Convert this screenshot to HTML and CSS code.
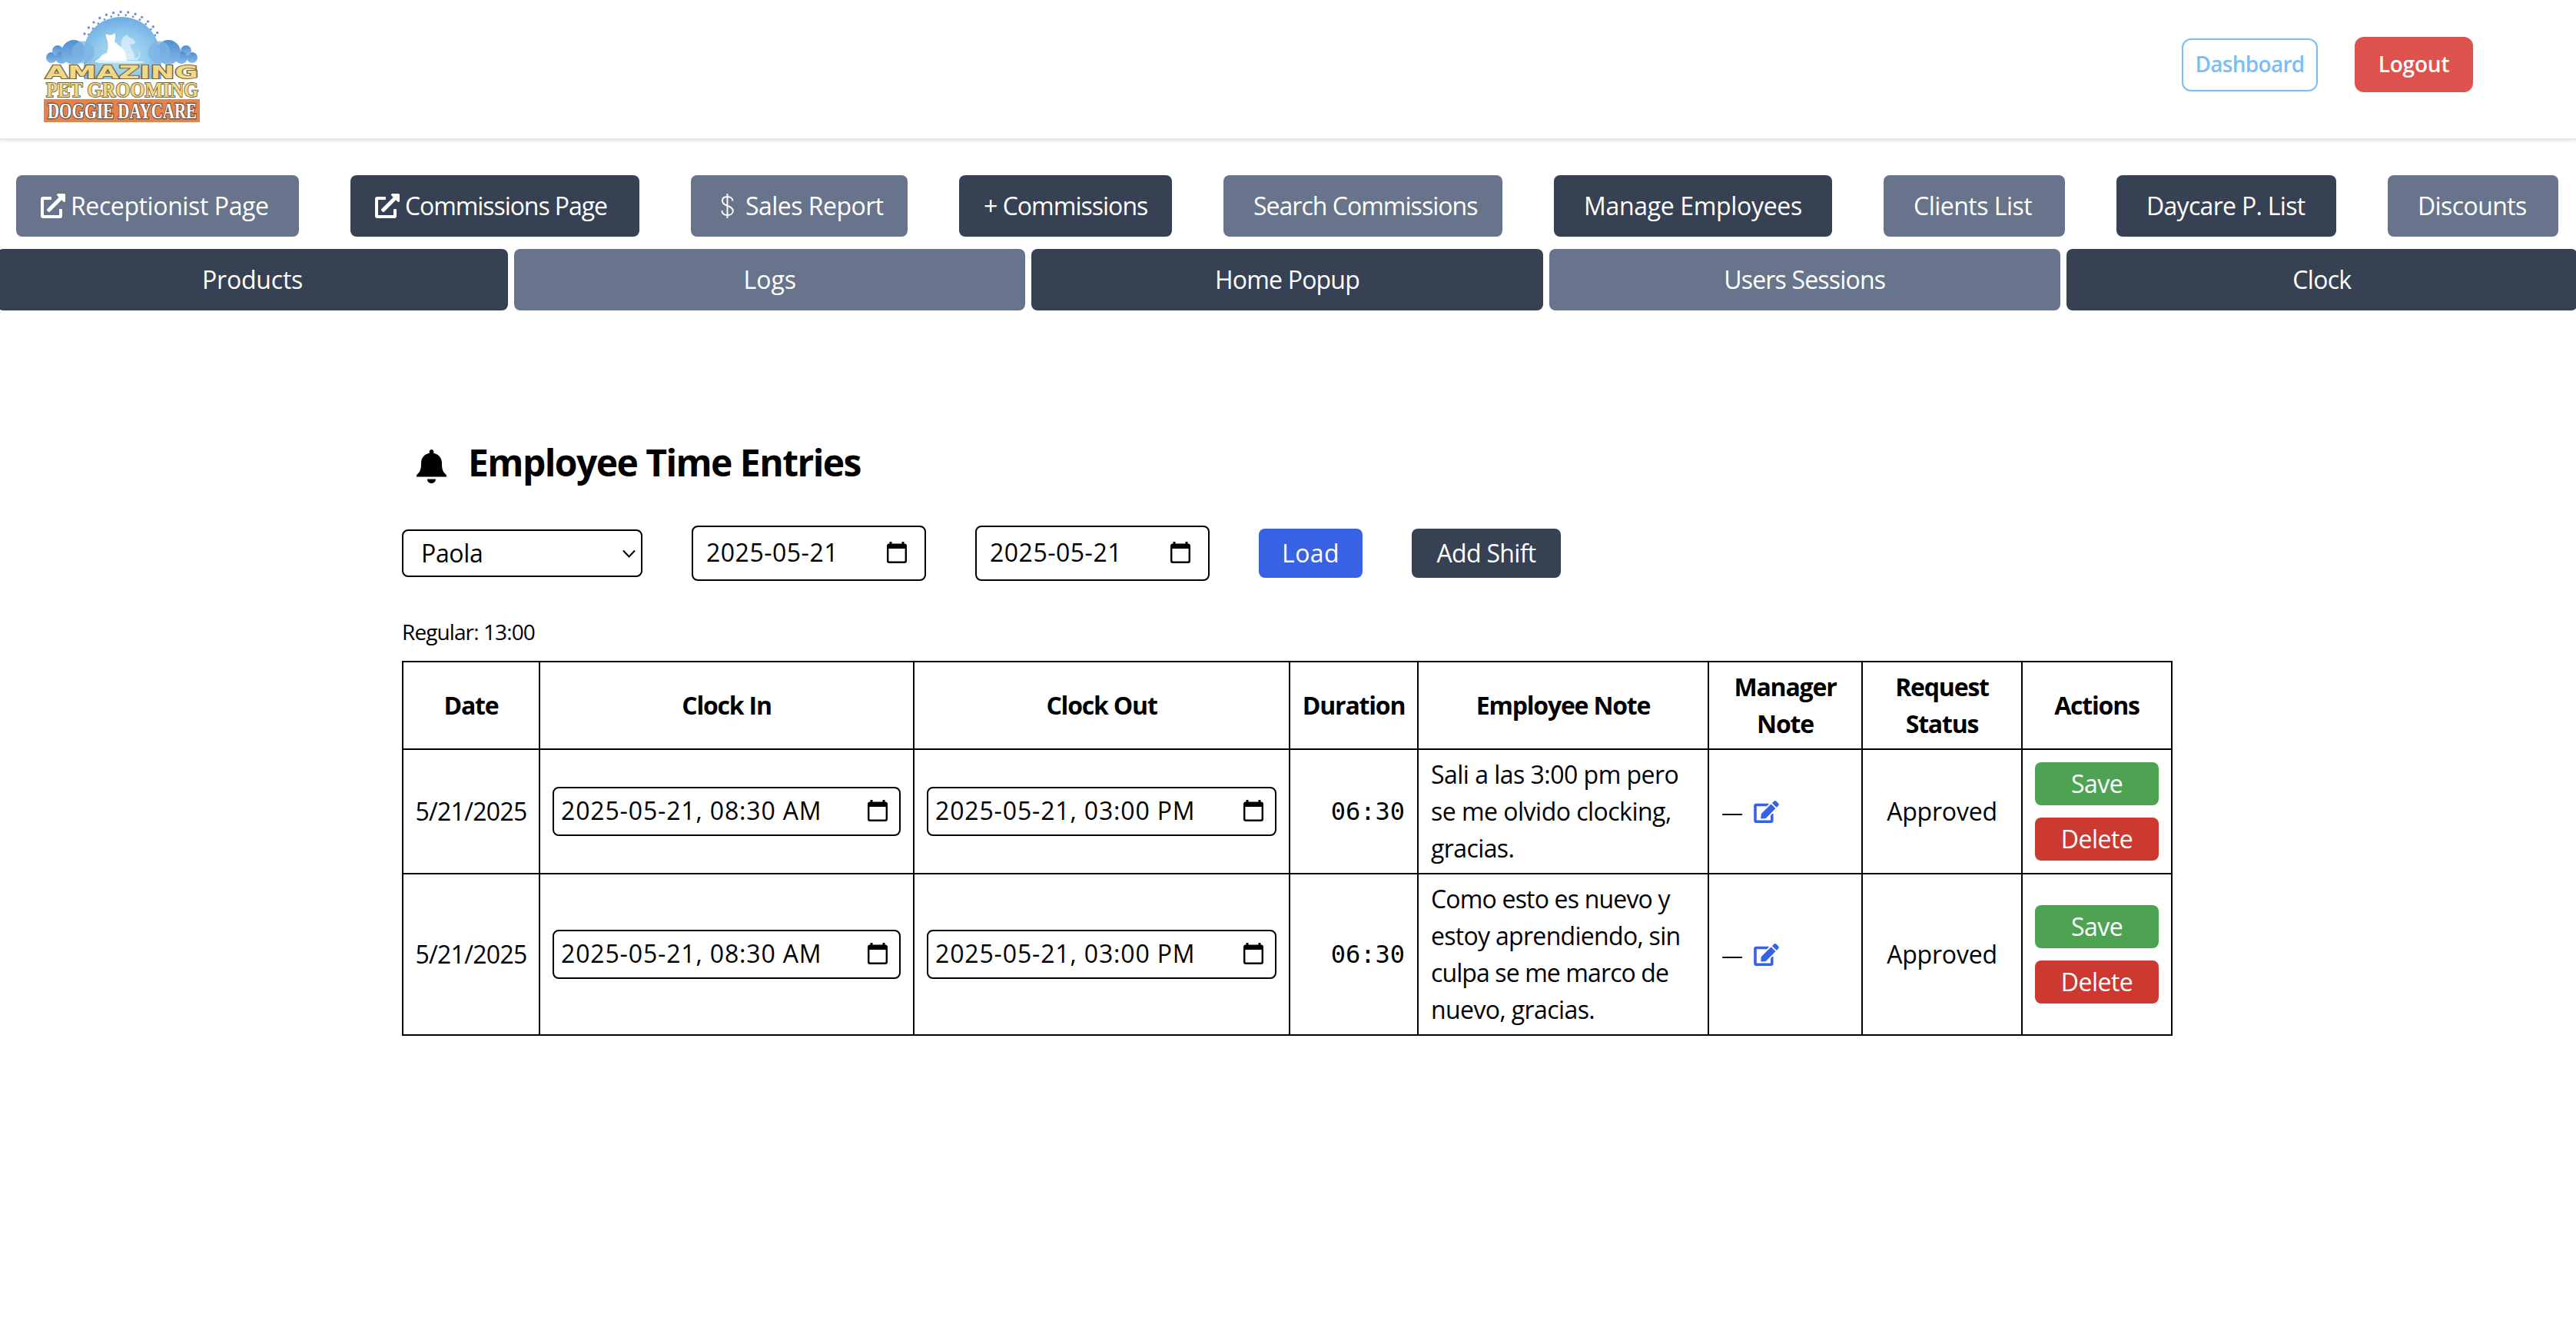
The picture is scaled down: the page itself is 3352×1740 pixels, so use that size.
FILE: index.html
```html
<!DOCTYPE html>
<html lang="en">
<head>
<meta charset="utf-8">
<title>Employee Time Entries</title>
<link rel="stylesheet" href="styles.css">
</head>
<body>
<svg class="defs" aria-hidden="true">
  <symbol id="i-open" viewBox="0 0 512 512"><path d="M432,320H400a16,16,0,0,0-16,16V448H64V128H208a16,16,0,0,0,16-16V80a16,16,0,0,0-16-16H48A48,48,0,0,0,0,112V464a48,48,0,0,0,48,48H400a48,48,0,0,0,48-48V336A16,16,0,0,0,432,320ZM488,0h-128c-21.37,0-32.05,25.91-17,41l35.73,35.73L135,320.37a24,24,0,0,0,0,34L157.67,377a24,24,0,0,0,34,0L435.28,133.32,471,169c15,15,41,4.5,41-17V24A24,24,0,0,0,488,0Z"/></symbol>
  <symbol id="i-edit" viewBox="0 0 576 512"><path d="M402.6 83.2l90.2 90.2c3.8 3.8 3.8 10 0 13.8L274.4 405.6l-92.8 10.3c-12.4 1.4-22.9-9.1-21.5-21.5l10.3-92.8L388.8 83.2c3.8-3.8 10-3.8 13.8 0zm162-22.9l-48.8-48.8c-15.2-15.2-39.9-15.2-55.2 0l-35.4 35.4c-3.8 3.8-3.8 10 0 13.8l90.2 90.2c3.8 3.8 10 3.8 13.8 0l35.4-35.4c15.2-15.3 15.2-40 0-55.2zM384 346.2V448H64V128h229.8c3.2 0 6.2-1.3 8.5-3.5l40-40c7.6-7.6 2.2-20.5-8.5-20.5H48C21.5 64 0 85.5 0 112v352c0 26.5 21.5 48 48 48h352c26.5 0 48-21.500 48-48V306.200c0-10.700-12.900-16-20.500-8.500l-40 40c-2.200 2.300-3.500 5.300-3.500 8.500z"/></symbol>
  <symbol id="i-cal" viewBox="0 0 26 28"><path fill-rule="evenodd" d="M3.5 0h3v2.6h13V0h3v2.6H23a3 3 0 0 1 3 3V25a3 3 0 0 1-3 3H3a3 3 0 0 1-3-3V5.6a3 3 0 0 1 3-3h.5zM2.400 9v15.600a1 1 0 0 0 1 1h19.200a1 1 0 0 0 1-1V9z"/></symbol>
  <symbol id="i-dollar" viewBox="0 0 32 32"><path fill="none" stroke="currentColor" stroke-width="1.9" d="M15.500 0v32M22.400 9.500c0-3.500-3-5.500-6.900-5.500s-6.600 2-6.600 5.400c0 7.400 13.900 5.400 13.900 13 0 3.500-3.200 5.600-7.300 5.600s-7.100-2.200-7.100-5.900"/></symbol>
</svg>

<header class="top">
  <svg class="logo" viewBox="57 12 203 148" role="img" aria-label="Amazing Pet Grooming Doggie Daycare">
    <defs>
      <radialGradient id="sky" cx=".5" cy=".65" r=".65"><stop offset="0" stop-color="#b5e0f3"/><stop offset=".6" stop-color="#8ec8ec"/><stop offset="1" stop-color="#6fabe2"/></radialGradient>
      <linearGradient id="cloud" x2="0" y2="1"><stop offset="0" stop-color="#4f8fd2"/><stop offset="1" stop-color="#8ab9e6"/></linearGradient>
    </defs>
    <path fill="none" stroke="#6c8fdc" stroke-width="3.400" stroke-linecap="round" stroke-dasharray="0 9.600" d="M110 44C120 26 138 16 158 15.500S196 26 206 45"/>
    <path fill="none" stroke="#6c8fdc" stroke-width="2.800" stroke-linecap="round" stroke-dasharray="0 9.600" stroke-dashoffset="5" d="M113 49C123 30 140 20 158 19.500S194 30 204 50"/>
    <g fill="url(#cloud)">
      <circle cx="67" cy="75" r="7"/><circle cx="75" cy="66" r="7"/><circle cx="80" cy="75" r="8"/><circle cx="96" cy="68" r="16"/>
      <circle cx="250" cy="75" r="7"/><circle cx="242" cy="66" r="7"/><circle cx="236" cy="75" r="8"/><circle cx="219" cy="68" r="16"/>
    </g>
    <path fill="url(#sky)" d="M109 62C114 38 134 22 158 22s44 16 49 40l3 24v17H109z"/>
    <g fill="#7db4e4" opacity=".75"><circle cx="108" cy="68" r="14.500"/><circle cx="207" cy="68" r="14.500"/></g>
    <path fill="#fff" opacity=".5" d="M158 54c1-5 4-8 8-9l1.500 3 5.500 2.500 3.500 5c0 2-5 2-7 2.500 0 6 6 9 6 18l4-1c3-3 2-7 0-9 4 1 4 10-2 12h-22z"/>
    <path fill="#fff" d="M138 44l3 1.500h5l3-2.500c2 4 1 8 0 11 4 5 12 8 14 15 1 5 1 9 3 13h-25c-5-3-9 1-14-1-3 0-5 0-1-3 6-2 4-7 13-9 3-8 1-12 1-16-2-3-2-6-2-9z"/>
    <path fill="#dff2fb" d="M126 79c5-3 10 0 15 0s35 0 48 1c-4 3-12 2-18 2h-43z"/>
    <g stroke="#75653f" stroke-width="2" paint-order="stroke" fill="#efd987">
      <text class="logo-a" x="59" y="102" textLength="199" lengthAdjust="spacingAndGlyphs">AMAZING</text>
      <text class="logo-b" x="60" y="125.500" textLength="198" lengthAdjust="spacingAndGlyphs">PET GROOMING</text>
    </g>
    <rect x="57" y="129" width="203" height="30" fill="#e5834c"/>
    <text class="logo-c" x="62" y="153.500" textLength="194" lengthAdjust="spacingAndGlyphs" fill="#fff" stroke="#5e4a41" stroke-width="2.400" paint-order="stroke">DOGGIE DAYCARE</text>
  </svg>
  <div class="top-actions">
    <a class="dash t-7">Dashboard</a>
    <a class="logout t-2">Logout</a>
  </div>
</header>

<nav class="nav">
  <div class="nav-main">
    <a class="tab slate lead"><svg class="ico"><use href="#i-open"/></svg><span class="t-4">Receptionist Page</span></a>
    <a class="tab navy lead"><svg class="ico"><use href="#i-open"/></svg><span class="t-11">Commissions Page</span></a>
    <a class="tab slate lead"><svg class="ico"><use href="#i-dollar"/></svg><span class="t-5">Sales Report</span></a>
    <a class="tab navy lead t-10">+ Commissions</a>
    <a class="tab slate t-10">Search Commissions</a>
    <a class="tab navy t-3">Manage Employees</a>
    <a class="tab slate t-5">Clients List</a>
    <a class="tab navy t-7">Daycare P. List</a>
    <a class="tab slate t-6">Discounts</a>
  </div>
  <div class="nav-sub">
    <a class="wide navy t-2">Products</a>
    <a class="wide slate">Logs</a>
    <a class="wide navy t-8">Home Popup</a>
    <a class="wide slate t-8">Users Sessions</a>
    <a class="wide navy t-7">Clock</a>
  </div>
</nav>

<main class="main">
  <h1 class="title"><svg class="bell" viewBox="0 0 39 44"><path d="M19.500 0c1.800 0 2.800 1.400 2.800 3v1.700c7 1.500 10.700 6.500 10.700 13.300 0 6.500.8 10.500 4.500 13.800 1.300 1.200 1.700 1.900 1.500 3.700H0c-.2-1.800.2-2.500 1.500-3.700C5.200 28.500 6 24.500 6 18c0-6.800 3.700-11.800 10.700-13.300V3c0-1.600 1-3 2.800-3zM14 38.500h11c0 3.200-2.400 5.500-5.500 5.500S14 41.700 14 38.500z"/></svg><span>Employee Time Entries</span></h1>

  <div class="filters">
    <div class="select"><span class="t-3">Paola</span><svg class="chev" viewBox="0 0 17 11"><path d="M1 1.500l7.500 8 7.500-8"/></svg></div>
    <div class="date"><span class="p-6">2025-05-21</span><svg class="cal"><use href="#i-cal"/></svg></div>
    <div class="date"><span class="p-6">2025-05-21</span><svg class="cal"><use href="#i-cal"/></svg></div>
    <button class="btn load p-4">Load</button>
    <button class="btn add t-7">Add Shift</button>
  </div>

  <p class="total t-9">Regular: 13:00</p>

  <table class="entries">
    <colgroup><col class="c-date"><col class="c-in"><col class="c-out"><col class="c-dur"><col class="c-note"><col class="c-mgr"><col class="c-req"><col class="c-act"></colgroup>
    <thead>
      <tr><th>Date</th><th>Clock In</th><th>Clock Out</th><th>Duration</th><th>Employee Note</th><th class="t-7">Manager<br>Note</th><th class="t-8">Request<br>Status</th><th>Actions</th></tr>
    </thead>
    <tbody>
      <tr>
        <td class="mid t-7">5/21/2025</td>
        <td><div class="stamp"><span class="p-9">2025-05-21, 08:30 AM</span><svg class="cal"><use href="#i-cal"/></svg></div></td>
        <td><div class="stamp"><span class="p-9">2025-05-21, 03:00 PM</span><svg class="cal"><use href="#i-cal"/></svg></div></td>
        <td class="dur">06:30</td>
        <td class="note"><span class="t-5">Sali a las 3:00 pm pero</span><br><span class="t-5">se me olvido clocking,</span><br><span class="t-6">gracias.</span></td>
        <td><div class="mgr"><span class="dash-mark">—</span><svg class="edit"><use href="#i-edit"/></svg></div></td>
        <td class="mid t-2">Approved</td>
        <td><div class="acts"><button class="act save t-5">Save</button><button class="act del t-5">Delete</button></div></td>
      </tr>
      <tr class="tall">
        <td class="mid t-7">5/21/2025</td>
        <td><div class="stamp"><span class="p-9">2025-05-21, 08:30 AM</span><svg class="cal"><use href="#i-cal"/></svg></div></td>
        <td><div class="stamp"><span class="p-9">2025-05-21, 03:00 PM</span><svg class="cal"><use href="#i-cal"/></svg></div></td>
        <td class="dur">06:30</td>
        <td class="note"><span class="t-8">Como esto es nuevo y</span><br><span class="t-7">estoy aprendiendo, sin</span><br><span class="t-9">culpa se me marco de</span><br><span class="t-6">nuevo, gracias.</span></td>
        <td><div class="mgr"><span class="dash-mark">—</span><svg class="edit"><use href="#i-edit"/></svg></div></td>
        <td class="mid t-2">Approved</td>
        <td><div class="acts"><button class="act save t-5">Save</button><button class="act del t-5">Delete</button></div></td>
      </tr>
    </tbody>
  </table>
</main>
</body>
</html>
```
FILE: styles.css
```css
* { box-sizing: border-box; }
body {
  margin: 0;
  background: #fff;
  color: #000;
  font: 400 32px/48px "Open Sans", "Noto Sans", sans-serif;
  overflow-x: hidden;
}
.defs { display: none; }
svg { flex: none; display: block; fill: currentColor; }

/* letter tracking, in tenths of a pixel */
.t-2 { letter-spacing: -.2px; }
.t-3 { letter-spacing: -.33px; }
.t-4 { letter-spacing: -.4px; }
.t-5 { letter-spacing: -.52px; }
.t-6 { letter-spacing: -.6px; }
.t-7 { letter-spacing: -.7px; }
.t-8 { letter-spacing: -.82px; }
.t-9 { letter-spacing: -.9px; }
.t-10 { letter-spacing: -.98px; }
.t-11 { letter-spacing: -1.08px; }
.p-4 { letter-spacing: .4px; }
.p-6 { letter-spacing: .5px; }
.p-9 { letter-spacing: .85px; }

.top {
  height: 180px;
  padding: 12px 134px 0 57px;
  display: flex;
  justify-content: space-between;
  align-items: flex-start;
  box-shadow: 0 2px 0 #e2e8f0, 0 3px 4px rgba(148, 163, 184, .35);
}
.logo { width: 203px; height: 148px; overflow: visible; }
.logo-a { font: 700 23px "DejaVu Sans", sans-serif; }
.logo-b { font: 700 28px "Liberation Serif", serif; }
.logo-c { font: 700 29px "Liberation Serif", serif; }
.top-actions { display: flex; gap: 48px; align-items: center; padding-top: 36px; }
.dash, .logout {
  display: flex;
  justify-content: center;
  padding-bottom: 2px;
  font-size: 28px;
  font-weight: 600;
  border-radius: 12px;
  align-items: center;
}
.dash { width: 177px; height: 69px; border: 2px solid #7bbdf4; color: #7bbdf4; }
.logout { width: 154px; height: 72px; background: #dd524c; color: #fff; }

.nav { padding-top: 48px; }
.nav-main { display: grid; grid-template-columns: 368px 376px 282px 277px 363px 362px 236px 286px 222px; justify-content: space-between; padding: 0 23px 0 21px; }
.nav-sub { display: grid; grid-template-columns: repeat(5, 1fr); gap: 8px; margin: 16px -2px 0 -4px; }
.tab, .wide { height: 80px; border-radius: 8px; display: flex; align-items: center; padding-bottom: 1px; color: #fff; white-space: nowrap; }
.tab { padding-left: 39px; }
.tab.lead { padding-left: 32px; gap: 7px; }
.wide { justify-content: center; }
.slate { background: #68748b; }
.navy { background: #364153; }
.ico { width: 32px; height: 32px; margin-top: 1px; }

.main { width: 2304px; margin-left: 523px; padding-top: 164px; }
.title { margin: 0; height: 64px; display: flex; align-items: flex-start; gap: 28px; padding-left: 19px; font-size: 48px; line-height: 68px; font-weight: 700; letter-spacing: -1.56px; }
.bell { width: 39px; height: 44px; margin-top: 17px; }

.filters { margin-top: 52px; height: 72px; display: flex; align-items: center; gap: 64px; }
.select, .date, .stamp { border: 2px solid #000; border-radius: 8px; display: flex; align-items: center; justify-content: space-between; }
.select { width: 313px; height: 62px; padding: 0 7px 0 23px; }
.chev { width: 17px; height: 11px; fill: none; stroke: #000; stroke-width: 2; margin-top: 1px; }
.date { width: 305px; height: 72px; padding: 0 23px 2px 17px; }
.cal { width: 26px; height: 28px; }
.btn { border: 0; padding: 0 0 1px; height: 64px; border-radius: 8px; color: #fff; font-family: inherit; font-size: 32px; }
.load { width: 135px; background: #3762e3; }
.add { width: 194px; background: #364153; }

.total { margin: 46px 0 18px; font-size: 28px; line-height: 40px; }

.entries { width: 2304px; table-layout: fixed; border-collapse: collapse; }
.c-date { width: 178px; }
.c-in { width: 487px; }
.c-out { width: 489px; }
.c-dur { width: 167px; }
.c-note { width: 378px; }
.c-mgr { width: 200px; }
.c-req { width: 208px; }
.c-act { width: 195px; }
.entries th, .entries td { border: 2px solid #000; padding: 8px 16px; vertical-align: middle; white-space: nowrap; }
.entries th { padding-left: 4px; padding-right: 4px; height: 114px; font-weight: 700; letter-spacing: -1.2px; }
.entries td { height: 162px; }
.entries .tall td { height: 210px; }
.entries .mid { text-align: center; padding-left: 4px; padding-right: 4px; }
.stamp { height: 64px; padding: 0 15px 2px 9px; }
.entries .dur { text-align: right; font-family: "DejaVu Sans Mono", monospace; padding-bottom: 9px; }
.mgr { display: flex; align-items: center; gap: 14px; }
.dash-mark { font-size: 28px; }
.edit { width: 33px; height: 29px; color: #3762e3; }
.acts { display: flex; flex-direction: column; gap: 16px; }
.act { border: 0; padding: 0 0 1px; height: 56px; border-radius: 8px; color: #fff; font-family: inherit; font-size: 32px; line-height: 48px; }
.save { background: #4ea353; }
.del { background: #cb3930; }
```
